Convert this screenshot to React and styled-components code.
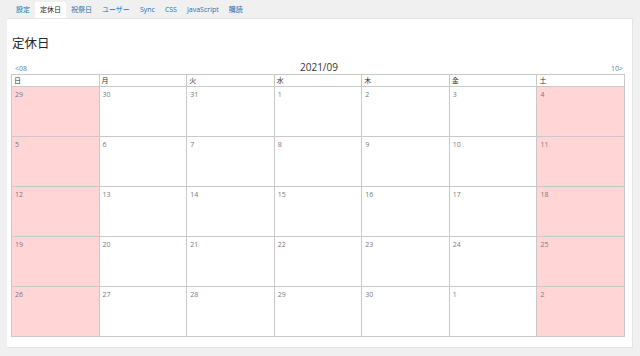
import React from "react";
import styled, { createGlobalStyle } from "styled-components";

const GlobalStyle = createGlobalStyle`
  html, body {
    margin: 0;
    padding: 0;
    background: #f0f0f1;
    font-family: "Open Sans", "Noto Sans CJK JP", sans-serif;
    color: #333;
  }
`;

const Page = styled.div`
  width: 640px;
  height: 356px;
  overflow: hidden;
`;

const Tabs = styled.ul`
  display: flex;
  margin: 0;
  padding: 2px 0 0 11px;
  list-style: none;
  height: 16px;
`;

const Tab = styled.li`
  padding: 0 5px;
  height: 16px;
  line-height: 16px;
  font-size: 7px;
  color: ${(p) => (p.active ? "#1d2327" : "#2271b1")};
  background: ${(p) => (p.active ? "#fff" : "transparent")};
  cursor: pointer;
`;

const Panel = styled.div`
  margin: 0 7px 0 7px;
  width: 626px;
  height: 330px;
  box-sizing: border-box;
  background: #fff;
  border: 1px solid #e4e4e4;
  border-left: none;
  padding: 16px 8px 0 4px;
`;

const Title = styled.h2`
  margin: 0 0 0 1px;
  font-size: 12.5px;
  font-weight: 400;
  line-height: 18px;
  color: #23282d;
`;

const NavRow = styled.div`
  display: flex;
  align-items: flex-end;
  justify-content: space-between;
  height: 14px;
  margin-top: 7px;
  padding: 0 1px 0 4px;
`;

const NavLink = styled.a`
  font-size: 7px;
  color: #5b7fa8;
  line-height: 10px;
  width: 40px;
  text-align: ${(p) => p.align};
`;

const Month = styled.span`
  font-size: 10px;
  line-height: 14px;
  color: #333;
`;

const Table = styled.table`
  width: 614px;
  border-collapse: collapse;
  table-layout: fixed;
`;

const Th = styled.th`
  height: 11px;
  padding: 0 2px;
  border: 1px solid #c9c9c9;
  font-size: 7px;
  font-weight: 400;
  text-align: left;
  line-height: 11px;
  color: #333;
`;

const Td = styled.td`
  height: 50px;
  padding: 3px 3px 0;
  vertical-align: top;
  border: 1px solid #c9c9c9;
  background: ${(p) => (p.holiday ? "#ffd5d5" : "#fff")};
  font-size: 7px;
  line-height: 10px;
  color: #7a7a7a;
  box-sizing: border-box;
`;

const weekdays = ["日", "月", "火", "水", "木", "金", "土"];

const weeks = [
  [29, 30, 31, 1, 2, 3, 4],
  [5, 6, 7, 8, 9, 10, 11],
  [12, 13, 14, 15, 16, 17, 18],
  [19, 20, 21, 22, 23, 24, 25],
  [26, 27, 28, 29, 30, 1, 2],
];

const tabs = ["設定", "定休日", "祝祭日", "ユーザー", "Sync", "CSS", "JavaScript", "購読"];

export default function App() {
  return (
    <Page>
      <GlobalStyle />
      <Tabs>
        {tabs.map((t) => (
          <Tab key={t} active={t === "定休日"}>
            {t}
          </Tab>
        ))}
      </Tabs>
      <Panel>
        <Title>定休日</Title>
        <NavRow>
          <NavLink align="left">&lt;08</NavLink>
          <Month>2021/09</Month>
          <NavLink align="right">10&gt;</NavLink>
        </NavRow>
        <Table>
          <thead>
            <tr>
              {weekdays.map((d) => (
                <Th key={d}>{d}</Th>
              ))}
            </tr>
          </thead>
          <tbody>
            {weeks.map((w, i) => (
              <tr key={i}>
                {w.map((n, j) => (
                  <Td key={j} holiday={j === 0 || j === 6}>
                    {n}
                  </Td>
                ))}
              </tr>
            ))}
          </tbody>
        </Table>
      </Panel>
    </Page>
  );
}
